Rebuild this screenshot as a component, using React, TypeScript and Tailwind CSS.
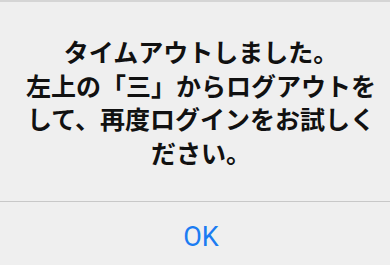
import React from "react";

export default function App() {
  return (
    <div className="w-[390px] h-[265px] overflow-hidden bg-[#efefef] border-t-2 border-[#d5d5d5] flex flex-col">
      <div
        className="shrink-0 pt-[33px] pl-[12px] h-[199px] text-center text-[25px] leading-[33.7px] font-bold text-[#111111]"
        style={{ fontFamily: '"Noto Sans CJK JP", "Noto Sans", sans-serif' }}
      >
        タイムアウトしました。
        <br />
        左上の「三」からログアウトを
        <br />
        して、再度ログインをお試しく
        <br />
        ださい。
      </div>
      <div className="shrink-0 h-px bg-[#c8c8c8]" />
      <button
        className="shrink-0 h-[70px] w-full pl-[12px] flex items-center justify-center text-[27px] text-[#1b7cf2]"
        style={{ fontFamily: 'Roboto, "Liberation Sans", sans-serif' }}
      >
        OK
      </button>
    </div>
  );
}
